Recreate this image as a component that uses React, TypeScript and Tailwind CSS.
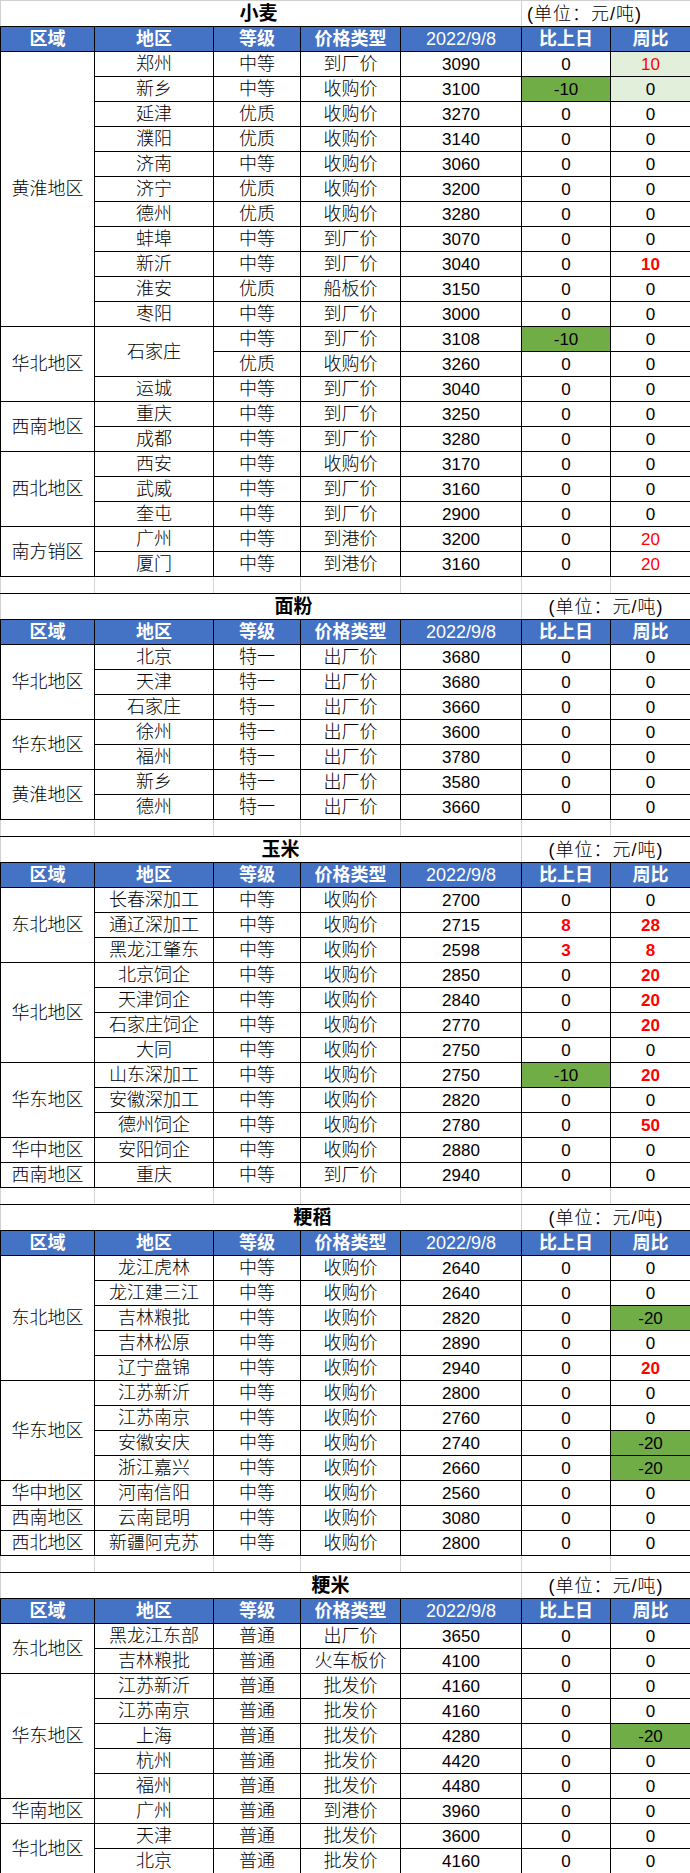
import React from "react";

type Val = { v: string; red?: boolean; bold?: boolean; bg?: "g" | "lg" };
type Row = {
  area?: string;
  span?: number;
  place?: string;
  placeSpan?: number;
  grade: string;
  ptype: string;
  price: string;
  d: Val;
  w: Val;
};
type Section = { title: string; titlePad: string; unitLeft?: boolean; rows: Row[]; blank: boolean };

const z: Val = { v: "0" };
const R = (v: string, bold = true): Val => ({ v, red: true, bold });
const G = (v: string): Val => ({ v, bg: "g" });

const sections: Section[] = [
  {
    title: "小麦",
    titlePad: "pr-[5px]",
    unitLeft: true,
    blank: true,
    rows: [
      { area: "黄淮地区", span: 11, place: "郑州", grade: "中等", ptype: "到厂价", price: "3090", d: z, w: { v: "10", red: true, bg: "lg" } },
      { place: "新乡", grade: "中等", ptype: "收购价", price: "3100", d: G("-10"), w: { v: "0", bg: "lg" } },
      { place: "延津", grade: "优质", ptype: "收购价", price: "3270", d: z, w: z },
      { place: "濮阳", grade: "优质", ptype: "收购价", price: "3140", d: z, w: z },
      { place: "济南", grade: "中等", ptype: "收购价", price: "3060", d: z, w: z },
      { place: "济宁", grade: "优质", ptype: "收购价", price: "3200", d: z, w: z },
      { place: "德州", grade: "优质", ptype: "收购价", price: "3280", d: z, w: z },
      { place: "蚌埠", grade: "中等", ptype: "到厂价", price: "3070", d: z, w: z },
      { place: "新沂", grade: "中等", ptype: "到厂价", price: "3040", d: z, w: R("10") },
      { place: "淮安", grade: "优质", ptype: "船板价", price: "3150", d: z, w: z },
      { place: "枣阳", grade: "中等", ptype: "到厂价", price: "3000", d: z, w: z },
      { area: "华北地区", span: 3, place: "石家庄", placeSpan: 2, grade: "中等", ptype: "到厂价", price: "3108", d: G("-10"), w: z },
      { grade: "优质", ptype: "收购价", price: "3260", d: z, w: z },
      { place: "运城", grade: "中等", ptype: "到厂价", price: "3040", d: z, w: z },
      { area: "西南地区", span: 2, place: "重庆", grade: "中等", ptype: "到厂价", price: "3250", d: z, w: z },
      { place: "成都", grade: "中等", ptype: "到厂价", price: "3280", d: z, w: z },
      { area: "西北地区", span: 3, place: "西安", grade: "中等", ptype: "收购价", price: "3170", d: z, w: z },
      { place: "武威", grade: "中等", ptype: "到厂价", price: "3160", d: z, w: z },
      { place: "奎屯", grade: "中等", ptype: "到厂价", price: "2900", d: z, w: z },
      { area: "南方销区", span: 2, place: "广州", grade: "中等", ptype: "到港价", price: "3200", d: z, w: R("20", false) },
      { place: "厦门", grade: "中等", ptype: "到港价", price: "3160", d: z, w: R("20", false) },
    ],
  },
  {
    title: "面粉",
    titlePad: "pl-[65px]",
    blank: true,
    rows: [
      { area: "华北地区", span: 3, place: "北京", grade: "特一", ptype: "出厂价", price: "3680", d: z, w: z },
      { place: "天津", grade: "特一", ptype: "出厂价", price: "3680", d: z, w: z },
      { place: "石家庄", grade: "特一", ptype: "出厂价", price: "3660", d: z, w: z },
      { area: "华东地区", span: 2, place: "徐州", grade: "特一", ptype: "出厂价", price: "3600", d: z, w: z },
      { place: "福州", grade: "特一", ptype: "出厂价", price: "3780", d: z, w: z },
      { area: "黄淮地区", span: 2, place: "新乡", grade: "特一", ptype: "出厂价", price: "3580", d: z, w: z },
      { place: "德州", grade: "特一", ptype: "出厂价", price: "3660", d: z, w: z },
    ],
  },
  {
    title: "玉米",
    titlePad: "pl-[39px]",
    blank: true,
    rows: [
      { area: "东北地区", span: 3, place: "长春深加工", grade: "中等", ptype: "收购价", price: "2700", d: z, w: z },
      { place: "通辽深加工", grade: "中等", ptype: "收购价", price: "2715", d: R("8"), w: R("28") },
      { place: "黑龙江肇东", grade: "中等", ptype: "收购价", price: "2598", d: R("3"), w: R("8") },
      { area: "华北地区", span: 4, place: "北京饲企", grade: "中等", ptype: "收购价", price: "2850", d: z, w: R("20") },
      { place: "天津饲企", grade: "中等", ptype: "收购价", price: "2840", d: z, w: R("20") },
      { place: "石家庄饲企", grade: "中等", ptype: "收购价", price: "2770", d: z, w: R("20") },
      { place: "大同", grade: "中等", ptype: "收购价", price: "2750", d: z, w: z },
      { area: "华东地区", span: 3, place: "山东深加工", grade: "中等", ptype: "收购价", price: "2750", d: G("-10"), w: R("20") },
      { place: "安徽深加工", grade: "中等", ptype: "收购价", price: "2820", d: z, w: z },
      { place: "德州饲企", grade: "中等", ptype: "收购价", price: "2780", d: z, w: R("50") },
      { area: "华中地区", span: 1, place: "安阳饲企", grade: "中等", ptype: "收购价", price: "2880", d: z, w: z },
      { area: "西南地区", span: 1, place: "重庆", grade: "中等", ptype: "到厂价", price: "2940", d: z, w: z },
    ],
  },
  {
    title: "粳稻",
    titlePad: "pl-[103px]",
    blank: true,
    rows: [
      { area: "东北地区", span: 5, place: "龙江虎林", grade: "中等", ptype: "收购价", price: "2640", d: z, w: z },
      { place: "龙江建三江", grade: "中等", ptype: "收购价", price: "2640", d: z, w: z },
      { place: "吉林粮批", grade: "中等", ptype: "收购价", price: "2820", d: z, w: G("-20") },
      { place: "吉林松原", grade: "中等", ptype: "收购价", price: "2890", d: z, w: z },
      { place: "辽宁盘锦", grade: "中等", ptype: "收购价", price: "2940", d: z, w: R("20") },
      { area: "华东地区", span: 4, place: "江苏新沂", grade: "中等", ptype: "收购价", price: "2800", d: z, w: z },
      { place: "江苏南京", grade: "中等", ptype: "收购价", price: "2760", d: z, w: z },
      { place: "安徽安庆", grade: "中等", ptype: "收购价", price: "2740", d: z, w: G("-20") },
      { place: "浙江嘉兴", grade: "中等", ptype: "收购价", price: "2660", d: z, w: G("-20") },
      { area: "华中地区", span: 1, place: "河南信阳", grade: "中等", ptype: "收购价", price: "2560", d: z, w: z },
      { area: "西南地区", span: 1, place: "云南昆明", grade: "中等", ptype: "收购价", price: "3080", d: z, w: z },
      { area: "西北地区", span: 1, place: "新疆阿克苏", grade: "中等", ptype: "收购价", price: "2800", d: z, w: z },
    ],
  },
  {
    title: "粳米",
    titlePad: "pl-[139px]",
    blank: false,
    rows: [
      { area: "东北地区", span: 2, place: "黑龙江东部", grade: "普通", ptype: "出厂价", price: "3650", d: z, w: z },
      { place: "吉林粮批", grade: "普通", ptype: "火车板价", price: "4100", d: z, w: z },
      { area: "华东地区", span: 5, place: "江苏新沂", grade: "普通", ptype: "批发价", price: "4160", d: z, w: z },
      { place: "江苏南京", grade: "普通", ptype: "批发价", price: "4160", d: z, w: z },
      { place: "上海", grade: "普通", ptype: "批发价", price: "4280", d: z, w: G("-20") },
      { place: "杭州", grade: "普通", ptype: "批发价", price: "4420", d: z, w: z },
      { place: "福州", grade: "普通", ptype: "批发价", price: "4480", d: z, w: z },
      { area: "华南地区", span: 1, place: "广州", grade: "普通", ptype: "到港价", price: "3960", d: z, w: z },
      { area: "华北地区", span: 2, place: "天津", grade: "普通", ptype: "批发价", price: "3600", d: z, w: z },
      { place: "北京", grade: "普通", ptype: "批发价", price: "4160", d: z, w: z },
    ],
  },
];

const cell = "border border-black p-0 text-center align-middle whitespace-nowrap";
const cjk = "text-[18px] font-light leading-none";
const num = "text-[17px] leading-none";

function ValCell({ val }: { val: Val }) {
  const bg = val.bg === "g" ? "bg-[#70ad47]" : val.bg === "lg" ? "bg-[#e2efda]" : "";
  const color = val.red ? "text-[#ff0000]" : "text-black";
  const weight = val.bold ? "font-bold" : "font-normal";
  return <td className={`${cell} ${num} ${bg} ${color} ${weight}`}>{val.v}</td>;
}

function TitleRow({ s, first }: { s: Section; first: boolean }) {
  const top = first ? "border-t-[#d0d0d0]" : "border-t-black";
  return (
    <tr className="h-[26px]">
      <td colSpan={5} className={`border-t border-b border-b-black border-l border-l-[#d0d0d0] ${top} ${s.titlePad} py-0 text-center align-middle text-[19px] font-bold text-black leading-none whitespace-nowrap`}>
        {s.title}
      </td>
      <td colSpan={2} className={`border-t border-b border-b-black border-l border-l-[#d0d0d0] border-r border-r-[#d0d0d0] ${top} p-0 align-middle text-[18px] font-light tracking-[1px] text-black leading-none whitespace-nowrap ${s.unitLeft ? "text-left pl-[5px]" : "text-center"}`}>
        (单位：元/吨)
      </td>
    </tr>
  );
}

function HeaderRow() {
  const h = `${cell} bg-[#4472c4] text-white font-bold text-[18px] leading-none`;
  return (
    <tr className="h-[25px]">
      <td className={h}>区域</td>
      <td className={h}>地区</td>
      <td className={h}>等级</td>
      <td className={h}>价格类型</td>
      <td className={`${cell} bg-[#4472c4] text-white font-normal text-[18px] leading-none`}>2022/9/8</td>
      <td className={h}>比上日</td>
      <td className={h}>周比</td>
    </tr>
  );
}

function BlankRow() {
  const b = "border border-t-black border-b-black border-x-[#d4d4d4] p-0";
  return (
    <tr className="h-[17px]">
      <td className={b}></td>
      <td className={b}></td>
      <td className={b}></td>
      <td className={b}></td>
      <td className={b}></td>
      <td className={b}></td>
      <td className={b}></td>
    </tr>
  );
}

export default function App() {
  return (
    <div className="w-[690px] bg-white font-['Liberation_Sans','Noto_Sans_CJK_SC',sans-serif] text-black">
      <table className="w-[690px] table-fixed border-collapse">
        <colgroup>
          <col className="w-[94px]" />
          <col className="w-[119px]" />
          <col className="w-[87px]" />
          <col className="w-[100px]" />
          <col className="w-[121px]" />
          <col className="w-[89px]" />
          <col className="w-[80px]" />
        </colgroup>
        <tbody>
          {sections.map((s, si) => (
            <React.Fragment key={s.title}>
              <TitleRow s={s} first={si === 0} />
              <HeaderRow />
              {s.rows.map((r, ri) => (
                <tr key={ri} className="h-[25px]">
                  {r.area && (
                    <td rowSpan={r.span} className={`${cell} ${cjk}`}>
                      {r.area}
                    </td>
                  )}
                  {r.place && (
                    <td rowSpan={r.placeSpan ?? 1} className={`${cell} ${cjk}`}>
                      {r.place}
                    </td>
                  )}
                  <td className={`${cell} ${cjk}`}>{r.grade}</td>
                  <td className={`${cell} ${cjk}`}>{r.ptype}</td>
                  <td className={`${cell} ${num}`}>{r.price}</td>
                  <ValCell val={r.d} />
                  <ValCell val={r.w} />
                </tr>
              ))}
              {s.blank && <BlankRow />}
            </React.Fragment>
          ))}
        </tbody>
      </table>
    </div>
  );
}
